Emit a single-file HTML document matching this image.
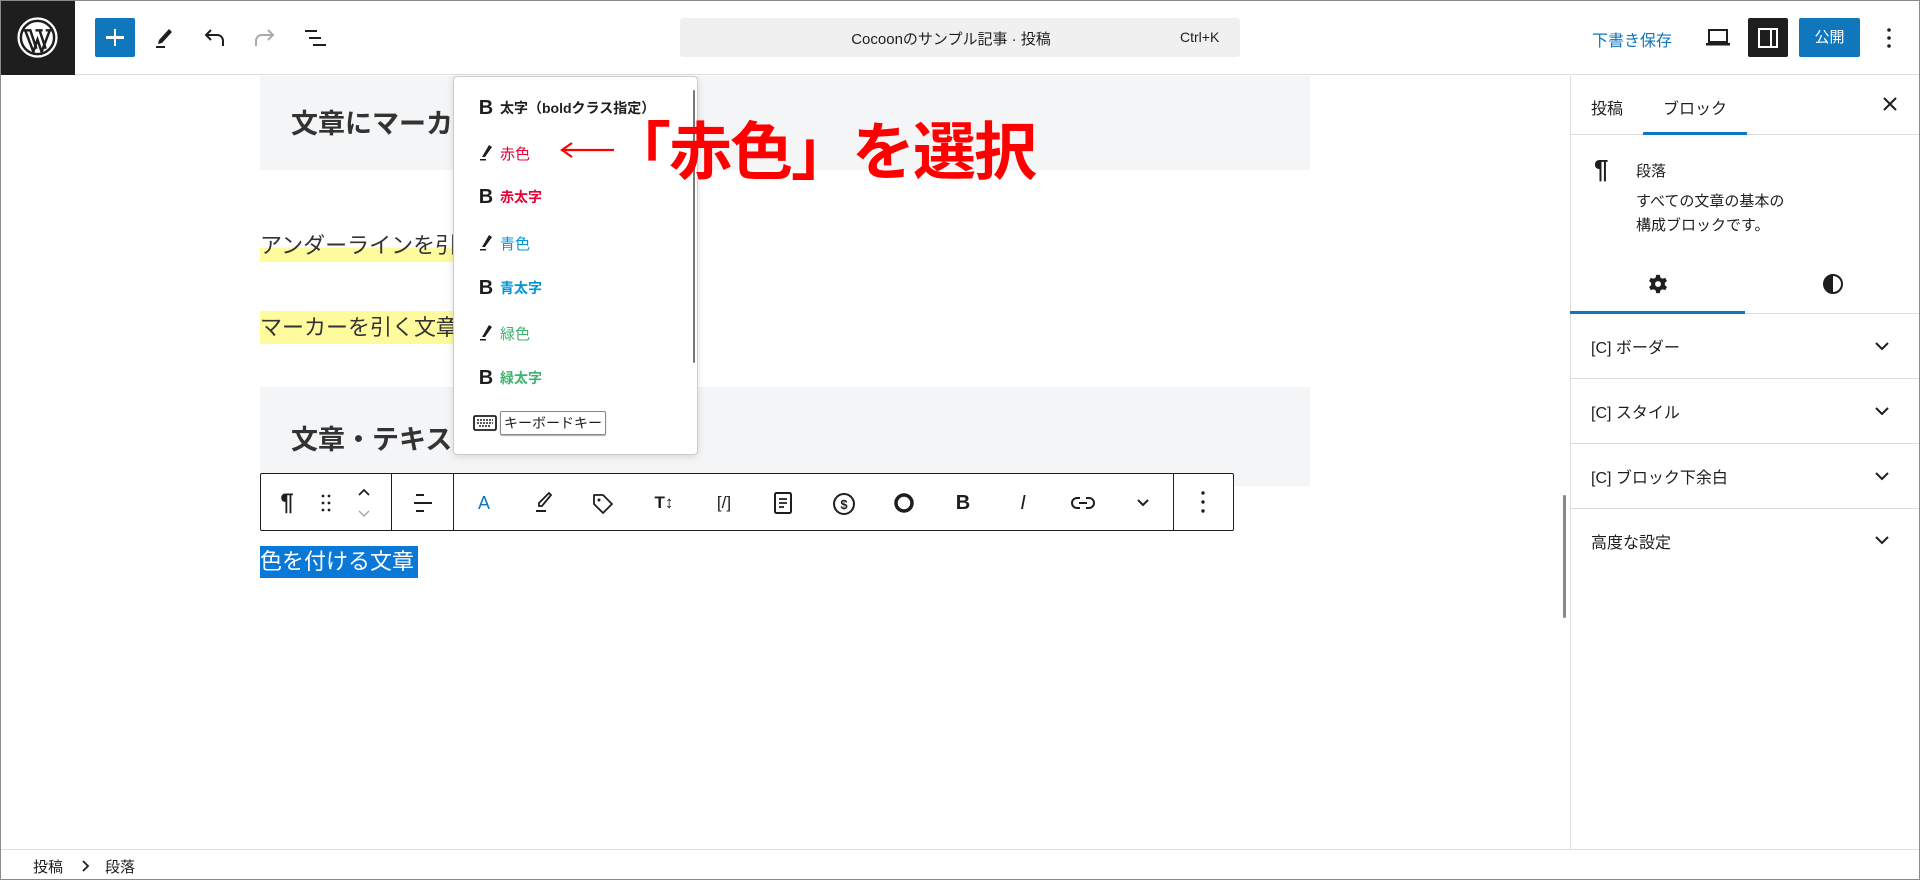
<!DOCTYPE html>
<html><head><meta charset="utf-8">
<style>
*{margin:0;padding:0;box-sizing:border-box}
body{width:1920px;height:880px;overflow:hidden;background:#fff;font-family:"Liberation Sans","Noto Sans CJK JP",sans-serif;color:#1e1e1e;position:relative}
.a{position:absolute}
.frame{position:absolute;left:0;top:0;width:1920px;height:880px;border:1px solid #8a8a8a;pointer-events:none;z-index:50}
svg{display:block}
.tb{position:absolute;top:0;left:0;width:1920px;height:75px;border-bottom:1px solid #ddd;background:#fff}
.pop .it{position:absolute;left:0;display:flex;align-items:center;font-size:15px;height:30px}
.pop .ic{width:20px;margin-left:22px;margin-right:4px;display:flex;justify-content:center}
.panel{position:absolute;left:1570px;width:350px;height:65px;border-bottom:1px solid #ddd;font-size:16px;display:flex;align-items:center;padding-left:21px}
.panel .chev{position:absolute;right:30px;top:26px}
.tool{position:absolute;top:0;height:58px;display:flex;align-items:center;justify-content:center;width:40px}
</style></head><body>

<div class="tb">
  <div class="a" style="left:0;top:0;width:75px;height:75px;background:#1e1e1e"></div>
  <svg class="a" style="left:17px;top:17px" width="41" height="41" viewBox="0 0 40 40"><circle cx="20" cy="20" r="18.5" fill="none" stroke="#fff" stroke-width="2.2"/><circle cx="20" cy="20" r="15" fill="#fff"/><path d="M8 13 L16 34 L20 22 L24 34 L32 13 M6 13h8 M18 13h7 M28 13h6 M13 13 L19 31 M22 13 L28 31" stroke="#1e1e1e" stroke-width="2.4" fill="none"/></svg>
  <div class="a" style="left:95px;top:18px;width:40px;height:39px;background:#1077bd;border-radius:2px"></div>
  <div class="a" style="left:106px;top:36px;width:18px;height:2.5px;background:#fff"></div>
  <div class="a" style="left:113.8px;top:28.5px;width:2.5px;height:17px;background:#fff"></div>
  <svg class="a" style="left:154px;top:27px" width="20" height="22" viewBox="0 0 20 22"><path d="M15 2 L18 5 L8 16 L4 17 L5 13 Z" fill="#1e1e1e"/><rect x="2" y="19" width="9" height="2" fill="#1e1e1e"/></svg>
  <svg class="a" style="left:203px;top:27px" width="24" height="22" viewBox="0 0 24 22"><path d="M8 3 L3 8 L8 13 M3 8 H14 C18 8 20 11 20 14 V19" stroke="#1e1e1e" stroke-width="2" fill="none"/></svg>
  <svg class="a" style="left:252px;top:27px" width="24" height="22" viewBox="0 0 24 22"><path d="M16 3 L21 8 L16 13 M21 8 H10 C6 8 4 11 4 14 V19" stroke="#aaa" stroke-width="2" fill="none"/></svg>
  <svg class="a" style="left:304px;top:28px" width="24" height="20" viewBox="0 0 24 20"><path d="M1 3h12 M5 10h12 M9 17h13" stroke="#1e1e1e" stroke-width="2"/></svg>
  <div class="a" style="left:680px;top:18px;width:560px;height:39px;background:#f0f0f0;border-radius:3px"></div>
  <div class="a" style="left:680px;top:28px;width:542px;font-size:15px;text-align:center">Cocoonのサンプル記事 · 投稿</div>
  <div class="a" style="left:1180px;top:29px;font-size:14px">Ctrl+K</div>
  <div class="a" style="left:1592px;top:27px;font-size:16px;color:#1077bd">下書き保存</div>
  <svg class="a" style="left:1705px;top:28px" width="26" height="20" viewBox="0 0 26 20"><rect x="4" y="2" width="18" height="12" fill="none" stroke="#1e1e1e" stroke-width="2"/><rect x="1" y="15" width="24" height="2.5" fill="#1e1e1e"/></svg>
  <div class="a" style="left:1748px;top:18px;width:40px;height:39px;background:#1e1e1e;border-radius:2px"></div>
  <svg class="a" style="left:1757px;top:27px" width="22" height="22" viewBox="0 0 22 22"><rect x="2" y="2" width="18" height="18" fill="none" stroke="#fff" stroke-width="2"/><rect x="13" y="2" width="2" height="18" fill="#fff"/></svg>
  <div class="a" style="left:1799px;top:18px;width:61px;height:39px;background:#1077bd;border-radius:2px;color:#fff;font-size:15px;text-align:center;line-height:39px">公開</div>
  <svg class="a" style="left:1885px;top:26px" width="8" height="24" viewBox="0 0 8 24"><circle cx="4" cy="4" r="1.8" fill="#1e1e1e"/><circle cx="4" cy="12" r="1.8" fill="#1e1e1e"/><circle cx="4" cy="20" r="1.8" fill="#1e1e1e"/></svg>
</div>

<div class="a" style="left:260px;top:76px;width:1050px;height:94px;background:#f4f5f7"></div>
<div class="a" style="left:291px;top:102px;font-size:27px;font-weight:bold;color:#333">文章にマーカーを引く</div>

<div class="a" style="left:260px;top:230px;font-size:22px;color:#333;background:linear-gradient(transparent 55%,#fdfb9b 55%);line-height:32px">アンダーラインを引く文章</div>
<div class="a" style="left:260px;top:311px;font-size:22px;color:#333;background:#fdfb9b;line-height:33px;padding-right:10px">マーカーを引く文章</div>

<div class="a" style="left:260px;top:387px;width:1050px;height:99px;background:#f4f5f7"></div>
<div class="a" style="left:291px;top:418px;font-size:27px;font-weight:bold;color:#333">文章・テキストの色</div>

<div class="a" style="left:260px;top:473px;width:974px;height:58px;border:1px solid #1e1e1e;background:#fff;border-radius:2px">
  <div class="a" style="left:130px;top:0;width:1px;height:56px;background:#1e1e1e"></div>
  <div class="a" style="left:192px;top:0;width:1px;height:56px;background:#1e1e1e"></div>
  <div class="a" style="left:912px;top:0;width:1px;height:56px;background:#1e1e1e"></div>
  <div class="tool" style="left:6px;font-size:24px;font-weight:bold">¶</div>
  <svg class="a" style="left:60px;top:20px" width="10" height="18" viewBox="0 0 10 18"><g fill="#1e1e1e"><circle cx="2" cy="2" r="1.4"/><circle cx="8" cy="2" r="1.4"/><circle cx="2" cy="9" r="1.4"/><circle cx="8" cy="9" r="1.4"/><circle cx="2" cy="16" r="1.4"/><circle cx="8" cy="16" r="1.4"/></g></svg>
  <svg class="a" style="left:96px;top:13px" width="14" height="32" viewBox="0 0 14 32"><path d="M2 8 L7 3 L12 8" stroke="#1e1e1e" stroke-width="1.8" fill="none"/><path d="M2 24 L7 29 L12 24" stroke="#aaa" stroke-width="1.5" fill="none"/></svg>
  <svg class="a" style="left:151px;top:18px" width="22" height="22" viewBox="0 0 22 22"><path d="M4 3h8 M2 11h18 M4 19h8" stroke="#1e1e1e" stroke-width="2"/></svg>
  <div class="tool" style="left:203px;color:#1077bd;font-size:18px">A</div>
  <svg class="a" style="left:272px;top:17px" width="20" height="24" viewBox="0 0 20 24"><path d="M16 2 L18 4 L9 15 L6 15 L6 12 Z" fill="none" stroke="#1e1e1e" stroke-width="1.8"/><rect x="3" y="19" width="10" height="2" fill="#1e1e1e"/></svg>
  <svg class="a" style="left:330px;top:18px" width="24" height="24" viewBox="0 0 24 24"><path d="M3 3h9l9 9-9 9-9-9z" fill="none" stroke="#1e1e1e" stroke-width="1.8" stroke-linejoin="round"/><circle cx="8" cy="8" r="1.5" fill="#1e1e1e"/></svg>
  <div class="tool" style="left:383px;font-weight:bold;font-size:17px">T↕</div>
  <div class="tool" style="left:443px;font-size:17px">[/]</div>
  <svg class="a" style="left:512px;top:18px" width="20" height="22" viewBox="0 0 20 22"><rect x="2" y="1" width="16" height="20" rx="1.5" fill="none" stroke="#1e1e1e" stroke-width="2"/><path d="M6 7h8 M6 11h8 M6 15h5" stroke="#1e1e1e" stroke-width="1.8"/></svg>
  <svg class="a" style="left:571px;top:18px" width="24" height="24" viewBox="0 0 24 24"><circle cx="12" cy="12" r="10" fill="none" stroke="#1e1e1e" stroke-width="2"/><text x="12" y="17" font-size="13" text-anchor="middle" font-family="Liberation Sans" font-weight="bold" fill="#1e1e1e">$</text></svg>
  <svg class="a" style="left:632px;top:18px" width="22" height="22" viewBox="0 0 22 22"><circle cx="11" cy="11" r="8" fill="none" stroke="#1e1e1e" stroke-width="3.5"/></svg>
  <div class="tool" style="left:682px;font-weight:bold;font-size:20px">B</div>
  <div class="tool" style="left:742px;font-style:italic;font-size:20px">I</div>
  <svg class="a" style="left:810px;top:19px" width="24" height="20" viewBox="0 0 24 20"><path d="M9 5H6a5 5 0 0 0 0 10h3 M15 5h3a5 5 0 0 1 0 10h-3 M8 10h8" stroke="#1e1e1e" stroke-width="2" fill="none"/></svg>
  <svg class="a" style="left:874px;top:22px" width="16" height="14" viewBox="0 0 16 14"><path d="M3 4 L8 9 L13 4" stroke="#1e1e1e" stroke-width="2" fill="none"/></svg>
  <svg class="a" style="left:939px;top:16px" width="6" height="24" viewBox="0 0 6 24"><circle cx="3" cy="3" r="1.7" fill="#1e1e1e"/><circle cx="3" cy="12" r="1.7" fill="#1e1e1e"/><circle cx="3" cy="21" r="1.7" fill="#1e1e1e"/></svg>
</div>

<div class="a" style="left:260px;top:546px;width:158px;height:32px;background:#0a78d7;color:#fff;font-size:22px;line-height:32px">色を付ける文章</div>

<div class="a pop" style="left:453px;top:76px;width:245px;height:379px;background:#fff;border:1px solid #ccc;border-radius:4px;box-shadow:0 2px 8px rgba(0,0,0,.12)">
  <div class="a" style="left:239px;top:13px;width:2px;height:273px;background:#777;border-radius:1px"></div>
  <div class="it" style="top:16px"><span class="ic" style="font-weight:bold;font-size:20px">B</span><b style="font-size:14px">太字（boldクラス指定）</b></div>
  <div class="it" style="top:61px"><span class="ic"><svg width="14" height="18" viewBox="0 0 14 18"><path d="M10 1 L13 3 L6 13 L3 13 Z" fill="#1e1e1e"/><rect x="1" y="15" width="6" height="1.5" fill="#1e1e1e"/></svg></span><span style="color:#e60033">赤色</span></div>
  <div class="it" style="top:105px"><span class="ic" style="font-weight:bold;font-size:20px">B</span><b style="color:#e60033;font-size:14px">赤太字</b></div>
  <div class="it" style="top:151px"><span class="ic"><svg width="14" height="18" viewBox="0 0 14 18"><path d="M10 1 L13 3 L6 13 L3 13 Z" fill="#1e1e1e"/><rect x="1" y="15" width="6" height="1.5" fill="#1e1e1e"/></svg></span><span style="color:#0095d9">青色</span></div>
  <div class="it" style="top:196px"><span class="ic" style="font-weight:bold;font-size:20px">B</span><b style="color:#0095d9;font-size:14px">青太字</b></div>
  <div class="it" style="top:241px"><span class="ic"><svg width="14" height="18" viewBox="0 0 14 18"><path d="M10 1 L13 3 L6 13 L3 13 Z" fill="#1e1e1e"/><rect x="1" y="15" width="6" height="1.5" fill="#1e1e1e"/></svg></span><span style="color:#3eb370">緑色</span></div>
  <div class="it" style="top:286px"><span class="ic" style="font-weight:bold;font-size:20px">B</span><b style="color:#3eb370;font-size:14px">緑太字</b></div>
  <div class="it" style="top:331px"><span class="ic" style="margin-left:18px;width:26px;margin-right:2px"><svg width="24" height="16" viewBox="0 0 24 16"><rect x="1" y="1" width="22" height="14" rx="1.5" fill="none" stroke="#1e1e1e" stroke-width="1.8"/><path d="M4 5h16 M4 8h16 M6 11h12" stroke="#1e1e1e" stroke-width="1.5" stroke-dasharray="2 1"/></svg></span><span style="border:1px solid #888;border-radius:2px;padding:0 3px;font-size:14px;line-height:22px;box-shadow:0 1px 1px #aaa">キーボードキー</span></div>
</div>

<!-- annotation -->
<svg class="a" style="left:560px;top:140px" width="56" height="20" viewBox="0 0 56 20"><path d="M2 10 H54 M12 3 L2 10 L12 17" stroke="#f00" stroke-width="2.2" fill="none"/></svg>
<div class="a" style="left:608px;top:108px;font-size:63px;font-weight:bold;color:#f00;line-height:80px;font-family:'Noto Sans CJK JP',sans-serif;letter-spacing:-2px">「赤色」を選択</div>

<div class="a" style="left:1563px;top:495px;width:3px;height:123px;background:#888;border-radius:2px"></div>

<div class="a" style="left:1570px;top:76px;width:1px;height:773px;background:#ddd"></div>
<div class="a" style="left:1570px;top:134px;width:350px;height:1px;background:#ddd"></div>
<div class="a" style="left:1591px;top:95px;font-size:16px">投稿</div>
<div class="a" style="left:1663px;top:95px;font-size:16px">ブロック</div>
<div class="a" style="left:1643px;top:132px;width:104px;height:3px;background:#1077bd"></div>
<svg class="a" style="left:1882px;top:96px" width="16" height="16" viewBox="0 0 16 16"><path d="M2 2L14 14M14 2L2 14" stroke="#1e1e1e" stroke-width="2"/></svg>
<div class="a" style="left:1594px;top:154px;font-size:26px;font-weight:bold">¶</div>
<div class="a" style="left:1636px;top:160px;font-size:15px">段落</div>
<div class="a" style="left:1636px;top:190px;font-size:15px;line-height:24px">すべての文章の基本の<br>構成ブロックです。</div>
<svg class="a" style="left:1647px;top:273px" width="22" height="22" viewBox="0 0 24 24"><path fill="#1e1e1e" d="M10 2h4l.6 3 2.3 1.3 2.9-1 2 3.4-2.3 2v2.6l2.3 2-2 3.4-2.9-1-2.3 1.3-.6 3h-4l-.6-3-2.3-1.3-2.9 1-2-3.4 2.3-2v-2.6l-2.3-2 2-3.4 2.9 1L9.4 5z"/><circle cx="12" cy="12" r="3.2" fill="#fff"/></svg>
<svg class="a" style="left:1822px;top:273px" width="22" height="22" viewBox="0 0 22 22"><circle cx="11" cy="11" r="9" fill="none" stroke="#1e1e1e" stroke-width="2"/><path d="M11 2a9 9 0 0 0 0 18z" fill="#1e1e1e"/></svg>
<div class="a" style="left:1570px;top:313px;width:350px;height:1px;background:#ddd"></div>
<div class="a" style="left:1570px;top:311px;width:175px;height:3px;background:#1077bd"></div>
<div class="panel" style="top:314px">[C] ボーダー<svg class="chev" width="16" height="12" viewBox="0 0 16 12"><path d="M2 3 L8 9 L14 3" stroke="#1e1e1e" stroke-width="2" fill="none"/></svg></div>
<div class="panel" style="top:379px">[C] スタイル<svg class="chev" width="16" height="12" viewBox="0 0 16 12"><path d="M2 3 L8 9 L14 3" stroke="#1e1e1e" stroke-width="2" fill="none"/></svg></div>
<div class="panel" style="top:444px">[C] ブロック下余白<svg class="chev" width="16" height="12" viewBox="0 0 16 12"><path d="M2 3 L8 9 L14 3" stroke="#1e1e1e" stroke-width="2" fill="none"/></svg></div>
<div class="panel" style="top:508px;border-bottom:none">高度な設定<svg class="chev" width="16" height="12" viewBox="0 0 16 12"><path d="M2 3 L8 9 L14 3" stroke="#1e1e1e" stroke-width="2" fill="none"/></svg></div>

<div class="a" style="left:0;top:849px;width:1920px;height:1px;background:#ddd"></div>
<div class="a" style="left:33px;top:856px;font-size:15px">投稿</div>
<svg class="a" style="left:80px;top:859px" width="10" height="14" viewBox="0 0 10 14"><path d="M3 2 L8 7 L3 12" stroke="#1e1e1e" stroke-width="1.8" fill="none"/></svg>
<div class="a" style="left:105px;top:856px;font-size:15px">段落</div>

<div class="frame"></div>
</body></html>
